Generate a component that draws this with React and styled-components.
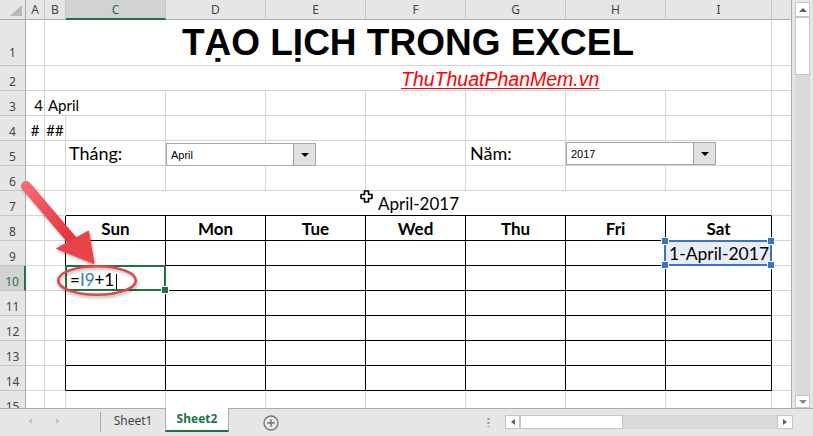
import React from 'react'
import styled, { createGlobalStyle } from 'styled-components'

const GREEN = '#217346'
const GRID = '#d4d4d4'
const HEAD_BG = '#e6e6e6'
const HEAD_LINE = '#ababab'
const HEAD_SEP = '#c6c6c6'
const REF_BLUE = '#3c72c8'

const COLS = ['A', 'B', 'C', 'D', 'E', 'F', 'G', 'H', 'I', '']
const COL_WIDTHS = [19, 21, 100, 100, 100, 100, 100, 100, 106, 19]
const ROW_HEIGHTS = [46, 25, 25, 25, 25, 25, 25, 25, 25, 25, 25, 25, 25, 25, 25]
const DAYS = ['Sun', 'Mon', 'Tue', 'Wed', 'Thu', 'Fri', 'Sat']

const GlobalStyle = createGlobalStyle`
  * { box-sizing: border-box; }
  html, body { margin: 0; padding: 0; }
  body {
    background: ${HEAD_BG};
    font-family: Lato, 'Noto Sans', sans-serif;
    overflow: hidden;
  }
`

const Window = styled.div`
  width: 813px;
  height: 436px;
  display: flex;
  flex-direction: column;
  background: ${HEAD_BG};
  overflow: hidden;
`

const Main = styled.div`
  display: flex;
  height: 408px;
`

const Sheet = styled.div`
  position: relative;
  display: grid;
  grid-template-columns: 26px ${COL_WIDTHS.map(w => `${w}px`).join(' ')};
  grid-template-rows: 20px ${ROW_HEIGHTS.map(h => `${h}px`).join(' ')};
  width: 792px;
  height: 408px;
  border-right: 1px solid ${HEAD_LINE};
  background: #fff;
  overflow: hidden;
`

const Corner = styled.div`
  grid-column: 1;
  grid-row: 1;
  position: relative;
  background: ${HEAD_BG};
  border-right: 1px solid ${HEAD_LINE};
  border-bottom: 1px solid ${HEAD_LINE};

  &::after {
    content: '';
    position: absolute;
    right: 3px;
    bottom: 3px;
    width: 12px;
    height: 11px;
    background: #b8b8b8;
    clip-path: polygon(100% 0, 100% 100%, 0 100%);
  }
`

const ColHead = styled.div`
  grid-column: ${p => p.$col};
  grid-row: 1;
  display: flex;
  align-items: center;
  justify-content: center;
  background: ${p => (p.$selected ? '#d2d2d2' : HEAD_BG)};
  border-right: 1px solid ${p => (p.$last ? 'transparent' : HEAD_SEP)};
  border-bottom: ${p => (p.$selected ? `2px solid ${GREEN}` : `1px solid ${HEAD_LINE}`)};
  color: ${p => (p.$selected ? GREEN : '#444')};
  font: 12px 'Noto Sans', sans-serif;
`

const RowHead = styled.div`
  grid-column: 1;
  grid-row: ${p => p.$row};
  display: flex;
  align-items: flex-end;
  justify-content: center;
  background: ${p => (p.$selected ? '#d2d2d2' : HEAD_BG)};
  border-right: ${p => (p.$selected ? `2px solid ${GREEN}` : `1px solid ${HEAD_LINE}`)};
  border-bottom: 1px solid ${HEAD_SEP};
  color: ${p => (p.$selected ? GREEN : '#444')};
  font: 12px/16px 'Noto Sans', sans-serif;
  padding-bottom: ${p => (p.$tall ? 4 : 0)}px;
`

const Cell = styled.div`
  grid-column: ${p => p.$col} / span ${p => p.$span || 1};
  grid-row: ${p => p.$row};
  display: flex;
  align-items: flex-end;
  justify-content: ${p => p.$justify || 'flex-start'};
  padding: 0 ${p => p.$pr ?? 3}px ${p => p.$pb ?? 1}px ${p => p.$pl ?? 3}px;
  border-right: 1px solid ${p => p.$right || GRID};
  border-bottom: 1px solid ${p => p.$bottom || GRID};
  background: #fff;
  color: #000;
  font-size: 15px;
  line-height: 1.2;
  white-space: nowrap;
  min-width: 0;
`

const ActiveCell = styled(Cell)`
  position: relative;
  z-index: 3;
`

const RefCell = styled(Cell)`
  position: relative;
  z-index: 2;
  background: #e8eef9;
`

const ActiveFrame = styled.span`
  position: absolute;
  left: -1px;
  top: -1px;
  right: -1px;
  bottom: -1px;
  border: 2px solid ${GREEN};
`

const FillHandle = styled.span`
  position: absolute;
  right: -4px;
  bottom: -4px;
  width: 6px;
  height: 6px;
  background: ${GREEN};
  box-shadow: 0 0 0 1px #fff;
`

const RefFrame = styled.span`
  position: absolute;
  left: -2px;
  top: -1px;
  right: -1px;
  bottom: -1px;
  border: 2px solid ${REF_BLUE};
`

const RefHandle = styled.span`
  position: absolute;
  ${p => p.$v}: -4px;
  ${p => p.$h}: -4px;
  width: 6px;
  height: 6px;
  background: ${REF_BLUE};
  box-shadow: 0 0 0 1px #fff;
`

const Title = styled.span`
  font: bold 37px/1 'Liberation Sans', Arial, sans-serif;
  color: #000;
`

const SiteLink = styled.span`
  font: italic 19.5px/1.1 'Liberation Sans', Arial, sans-serif;
  color: #ff0000;
  text-decoration: underline;
  text-underline-offset: 2px;
`

const Label = styled.span`
  font-size: 18px;
`

const MonthTitle = styled.span`
  font-size: 17px;
`

const DayName = styled.span`
  font-size: 17px;
  font-weight: 700;
`

const DateValue = styled.span`
  font-size: 17.5px;
`

const Formula = styled.span`
  font-size: 17px;
`

const RefText = styled.span`
  color: ${REF_BLUE};
`

const Caret = styled.span`
  display: inline-block;
  width: 1px;
  height: 16px;
  margin-left: 2px;
  background: #000;
  vertical-align: -4px;
`

const Combo = styled.div`
  position: absolute;
  left: ${p => p.$x}px;
  top: ${p => p.$y}px;
  z-index: 4;
  width: 150px;
  height: 23px;
  display: flex;
  align-items: stretch;
  background: #fff;
  border: 1px solid #a6a6a6;
  font: 11px 'Liberation Sans', Arial, sans-serif;
  color: #000;
`

const ComboText = styled.span`
  flex: 1;
  display: flex;
  align-items: center;
  padding-left: 4px;
`

const ComboButton = styled.span`
  width: 22px;
  display: flex;
  align-items: center;
  justify-content: center;
  background: #e1e1e1;
  border-left: 1px solid #9c9c9c;

  &::after {
    content: '';
    border-left: 4px solid transparent;
    border-right: 4px solid transparent;
    border-top: 4px solid #000;
  }
`

const SelectCursor = styled.svg`
  position: absolute;
  left: 360px;
  top: 190px;
  z-index: 5;
`

const Annotations = styled.svg`
  position: absolute;
  left: 0;
  top: 0;
  z-index: 6;
  pointer-events: none;
  overflow: visible;
  filter: drop-shadow(1px 2px 1.5px rgba(0, 0, 0, 0.3));
`

const VScroll = styled.div`
  width: 21px;
  height: 408px;
  display: flex;
  flex-direction: column;
  padding: 2px 3px 0;
`

const ScrollButton = styled.div`
  flex: none;
  width: ${p => p.$w || 15}px;
  height: ${p => p.$h || 15}px;
  display: flex;
  align-items: center;
  justify-content: center;
  background: #fff;
  border: 1px solid ${HEAD_SEP};
`

const Tri = styled.span`
  width: 0;
  height: 0;
  ${p =>
    p.$dir === 'up' &&
    `border-left: 4px solid transparent; border-right: 4px solid transparent; border-bottom: 4px solid ${p.$color || '#606060'};`}
  ${p =>
    p.$dir === 'down' &&
    `border-left: 4px solid transparent; border-right: 4px solid transparent; border-top: 4px solid ${p.$color || '#606060'};`}
  ${p =>
    p.$dir === 'left' &&
    `border-top: 3.5px solid transparent; border-bottom: 3.5px solid transparent; border-right: 4px solid ${p.$color || '#606060'};`}
  ${p =>
    p.$dir === 'right' &&
    `border-top: 3.5px solid transparent; border-bottom: 3.5px solid transparent; border-left: 4px solid ${p.$color || '#606060'};`}
`

const ScrollThumb = styled.div`
  flex: none;
  width: ${p => p.$w || 15}px;
  height: ${p => p.$h || 15}px;
  background: #fff;
  border: 1px solid ${HEAD_SEP};
`

const ScrollTrack = styled.div`
  flex: 1;
  background: #dadada;
`

const TabBar = styled.div`
  height: 28px;
  display: flex;
  align-items: flex-start;
  background: ${HEAD_BG};
  border-top: 1px solid ${HEAD_LINE};
  font: 12px 'Noto Sans', sans-serif;
  color: #444;
`

const SheetNav = styled.div`
  width: 100px;
  height: 23px;
  display: flex;
  align-items: center;
  gap: 24px;
  padding-left: 28px;
`

const Divider = styled.div`
  width: 1px;
  height: 20px;
  margin-top: 3px;
  background: ${HEAD_LINE};
`

const SheetTab = styled.div`
  width: 64px;
  height: ${p => (p.$active ? 24 : 23)}px;
  margin-top: ${p => (p.$active ? -1 : 0)}px;
  display: flex;
  align-items: center;
  justify-content: center;
  padding-bottom: 1px;
  background: ${p => (p.$active ? '#fff' : 'transparent')};
  border-left: ${p => (p.$active ? `1px solid ${HEAD_LINE}` : 'none')};
  border-right: ${p => (p.$active ? `1px solid ${HEAD_LINE}` : 'none')};
  border-bottom: ${p => (p.$active ? `2px solid ${GREEN}` : 'none')};
  color: ${p => (p.$active ? GREEN : '#444')};
  font-weight: ${p => (p.$active ? 700 : 400)};
`

const AddSheet = styled.svg`
  margin: 6px 0 0 34px;
`

const Grip = styled.div`
  width: 3px;
  height: 10px;
  margin: 8px 0 0 208px;
  background: radial-gradient(circle, #9a9a9a 1px, transparent 1.3px) 0 0 / 3px 4px;
`

const HScroll = styled.div`
  width: 288px;
  height: 14px;
  margin: 6px 0 0 15px;
  display: flex;
`

const ROW_SPECS = {
  1: [{ c: 1, span: 8, justify: 'center', pb: 4, content: <Title>TẠO LỊCH TRONG EXCEL</Title> }],
  2: [{ c: 1, span: 8, pl: 356, pb: 0, content: <SiteLink>ThuThuatPhanMem.vn</SiteLink> }],
  3: [
    { c: 0, justify: 'flex-end', pr: 1, content: '4' },
    { c: 1, span: 2, content: 'April' },
  ],
  4: [
    { c: 0, justify: 'center', pl: 0, pr: 0, content: '#' },
    { c: 1, justify: 'center', pl: 0, pr: 0, content: '##' },
  ],
  5: [
    { c: 2, pb: 0, content: <Label>Tháng:</Label> },
    { c: 6, pl: 4, pb: 0, content: <Label>Năm:</Label> },
  ],
  7: [{ c: 2, span: 7, justify: 'center', bottom: '#000', content: <MonthTitle>April-2017</MonthTitle> }],
  8: DAYS.map((d, i) => ({ c: 2 + i, justify: 'center', content: <DayName>{d}</DayName> })),
  9: [{ c: 8, kind: 'ref', content: <DateValue>1-April-2017</DateValue> }],
  10: [
    {
      c: 2,
      kind: 'active',
      pl: 4,
      pb: 0,
      content: (
        <Formula>
          =<RefText>I9</RefText>+1
          <Caret />
        </Formula>
      ),
    },
  ],
}

const edgeFor = (r, c) => {
  const inTable = r >= 8 && r <= 14
  const edge = {}
  if (inTable && c >= 2 && c <= 8) {
    edge.right = '#000'
    edge.bottom = '#000'
  }
  if (inTable && c === 1) edge.right = '#000'
  if (c === 9) edge.right = 'transparent'
  return edge
}

const renderCells = () => {
  const out = []
  for (let r = 1; r <= ROW_HEIGHTS.length; r++) {
    const specs = ROW_SPECS[r] || []
    let c = 0
    while (c < COLS.length) {
      const spec = specs.find(s => s.c === c) || { c }
      const span = spec.span || 1
      const edge = edgeFor(r, c + span - 1)
      const Comp = spec.kind === 'active' ? ActiveCell : spec.kind === 'ref' ? RefCell : Cell
      out.push(
        <Comp
          key={`${r}-${c}`}
          $row={r + 1}
          $col={c + 2}
          $span={span}
          $justify={spec.justify}
          $pl={spec.pl}
          $pr={spec.pr}
          $pb={spec.pb}
          $right={edge.right}
          $bottom={spec.bottom || edge.bottom}
        >
          {spec.content}
          {spec.kind === 'active' && (
            <ActiveFrame>
              <FillHandle />
            </ActiveFrame>
          )}
          {spec.kind === 'ref' && (
            <RefFrame>
              <RefHandle $v="top" $h="left" />
              <RefHandle $v="top" $h="right" />
              <RefHandle $v="bottom" $h="left" />
              <RefHandle $v="bottom" $h="right" />
            </RefFrame>
          )}
        </Comp>
      )
      c += span
    }
  }
  return out
}

export default function App() {
  return (
    <>
      <GlobalStyle />
      <Window>
        <Main>
          <Sheet>
            <Corner />
            {COLS.map((l, i) => (
              <ColHead key={i} $col={i + 2} $selected={l === 'C'} $last={i === COLS.length - 1}>
                {l}
              </ColHead>
            ))}
            {ROW_HEIGHTS.map((_, i) => (
              <RowHead key={i} $row={i + 2} $selected={i + 1 === 10} $tall={i === 0}>
                {i + 1}
              </RowHead>
            ))}
            {renderCells()}

            <Combo $x={166} $y={143}>
              <ComboText>April</ComboText>
              <ComboButton />
            </Combo>
            <Combo $x={566} $y={142}>
              <ComboText>2017</ComboText>
              <ComboButton />
            </Combo>

            <SelectCursor width="14" height="14" viewBox="0 0 14 14">
              <path
                d="M4.5 1h4v3.5H12v4H8.5V12h-4V8.5H1v-4h3.5z"
                fill="#fff"
                stroke="#000"
                strokeWidth="1.6"
                strokeLinejoin="round"
              />
            </SelectCursor>

            <Annotations width="792" height="408" viewBox="0 0 792 408">
              <defs>
                <linearGradient id="arrowRed" x1="0" y1="0" x2="1" y2="1">
                  <stop offset="0" stopColor="#f36b70" />
                  <stop offset="1" stopColor="#e3323b" />
                </linearGradient>
              </defs>
              <line x1="26" y1="186" x2="72" y2="240" stroke="url(#arrowRed)" strokeWidth="10" strokeLinecap="round" />
              <polygon points="56.5,248.5 88.5,231 94,263.5" fill="#e9434a" strokeLinejoin="round" stroke="#e9434a" strokeWidth="1" />
              <ellipse cx="97" cy="280.5" rx="38.8" ry="14.3" fill="none" stroke="#e6434d" strokeWidth="2.6" />
            </Annotations>
          </Sheet>

          <VScroll>
            <ScrollButton>
              <Tri $dir="up" />
            </ScrollButton>
            <ScrollThumb $h={58} />
            <ScrollTrack />
            <ScrollButton $h={13}>
              <Tri $dir="down" $color="#8a8a8a" />
            </ScrollButton>
          </VScroll>
        </Main>

        <TabBar>
          <SheetNav>
            <Tri $dir="left" $color="#c4c4c4" />
            <Tri $dir="right" $color="#c4c4c4" />
          </SheetNav>
          <Divider />
          <SheetTab>Sheet1</SheetTab>
          <SheetTab $active>Sheet2</SheetTab>
          <AddSheet width="16" height="16" viewBox="0 0 16 16">
            <circle cx="8" cy="8" r="7" fill="none" stroke="#777" strokeWidth="1.3" />
            <path d="M8 4.2v7.6M4.2 8h7.6" stroke="#777" strokeWidth="1.5" />
          </AddSheet>
          <Grip />
          <HScroll>
            <ScrollButton $w={15} $h={14}>
              <Tri $dir="left" />
            </ScrollButton>
            <ScrollThumb $w={103} $h={14} />
            <ScrollTrack />
            <ScrollButton $w={16} $h={14}>
              <Tri $dir="right" />
            </ScrollButton>
          </HScroll>
        </TabBar>
      </Window>
    </>
  )
}
